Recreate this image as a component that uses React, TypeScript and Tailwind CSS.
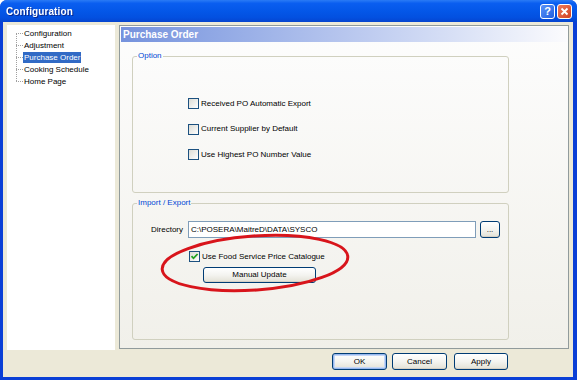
import React from "react";

function CheckBox({ checked = false }: { checked?: boolean }) {
  return (
    <div className="w-[11px] h-[11px] border border-[#1c5180] bg-gradient-to-br from-[#dcdcd5] to-[#ffffff] flex items-center justify-center shrink-0">
      {checked && (
        <svg width="9" height="9" viewBox="0 0 9 9">
          <path d="M1.5 4.2 L3.5 6.3 L7.6 2" stroke="#21a121" strokeWidth="1.8" fill="none" />
        </svg>
      )}
    </div>
  );
}

function XPButton({ label, w, focus = false, h = 17 }: { label: string; w: string; focus?: boolean; h?: number }) {
  return (
    <div
      className={`${w} border border-[#003c74] rounded-[3px] bg-gradient-to-b from-[#ffffff] via-[#f4f4f0] to-[#e3e1d6] flex items-center justify-center text-[8px] text-black ${
        focus ? "shadow-[inset_0_0_0_1px_#97b8ee,inset_0_0_0_2px_#c4d6f6]" : "shadow-[inset_0_-1px_0_#d6d0c5]"
      }`}
      style={{ height: h }}
    >
      {label}
    </div>
  );
}

const treeItems = ["Configuration", "Adjustment", "Purchase Order", "Cooking Schedule", "Home Page"];

export default function App() {
  return (
    <div className="w-[577px] h-[380px] bg-[#0a3fd6] rounded-t-[7px] flex flex-col overflow-hidden font-['Liberation_Sans',Arial,sans-serif] relative">
      {/* Title bar */}
      <div className="h-[22px] shrink-0 bg-[linear-gradient(to_bottom,#2a7bf5_0%,#0a5ef0_15%,#0457e8_50%,#0350e0_80%,#0645cf_100%)] flex items-center pl-[6px] pr-[5px]">
        <span className="text-white font-bold text-[10px] tracking-[0.1px] drop-shadow-[1px_1px_0_#0a2a90]">Configuration</span>
        <div className="ml-auto flex gap-[2px]">
          <div className="w-[15px] h-[15px] rounded-[3px] border border-white bg-gradient-to-br from-[#5a92f8] to-[#1f5fe0] flex items-center justify-center text-white font-bold text-[11px] leading-none">?</div>
          <div className="w-[15px] h-[15px] rounded-[3px] border border-white bg-gradient-to-br from-[#ec7a5a] to-[#d2401e] flex items-center justify-center">
            <svg width="9" height="9" viewBox="0 0 9 9">
              <path d="M1.5 1.5 L7.5 7.5 M7.5 1.5 L1.5 7.5" stroke="white" strokeWidth="1.8" />
            </svg>
          </div>
        </div>
      </div>

      {/* Body */}
      <div className="flex-1 ml-[3px] mr-[4px] mb-[3px] bg-[#ece9d8] flex flex-col">
        <div className="flex gap-[4px] pt-[3px] pl-[4px]">
          {/* Tree */}
          <div className="w-[108px] h-[325px] bg-white relative pt-[2px]">
            <div className="absolute left-[9px] top-[8px] h-[48px] border-l border-dotted border-[#a0a0a0]" />
            {treeItems.map((t) => (
              <div key={t} className="h-[12px] flex items-center">
                <div className="w-[9px]" />
                <div className="w-[7px] border-t border-dotted border-[#a0a0a0]" />
                <span
                  className={`text-[8px] leading-[11px] px-[1px] whitespace-nowrap ${
                    t === "Purchase Order" ? "bg-[#316ac5] text-white" : "text-black"
                  }`}
                >
                  {t}
                </span>
              </div>
            ))}
          </div>

          {/* Right panel */}
          <div className="w-[450px] h-[324px] border border-[#919b9c] bg-gradient-to-b from-[#fdfdfd] to-[#f1f0ea] p-[1px] flex flex-col">
            <div className="h-[15px] bg-gradient-to-r from-[#7592dd] via-[#b7c6ee] to-[#fbfbfd] flex items-center pl-[2px]">
              <span className="text-white font-bold text-[10px]">Purchase Order</span>
            </div>

            <fieldset className="mt-[9px] ml-[11px] w-[377px] h-[142px] border border-[#d0d0bf] rounded-[3px]">
              <legend className="ml-[4px] px-[1px] text-[8px] leading-[10px] text-[#0046d5]">Option</legend>
              <div className="pt-[36px] pl-[55px] flex flex-col gap-[12.5px]">
                {["Received PO Automatic Export", "Current Supplier by Default", "Use Highest PO Number Value"].map((l) => (
                  <div key={l} className="h-[13px] flex items-center gap-[1px]">
                    <CheckBox />
                    <span className="text-[8px] text-black ml-[1px]">{l}</span>
                  </div>
                ))}
              </div>
            </fieldset>

            <fieldset className="mt-[5px] ml-[11px] w-[377px] h-[142px] border border-[#d0d0bf] rounded-[3px]">
              <legend className="ml-[4px] px-[1px] text-[8px] leading-[10px] text-[#0046d5]">Import / Export</legend>
              <div className="pt-[13px] flex items-center">
                <div className="w-[50px] text-right text-[8px] text-black">Directory</div>
                <div className="ml-[5px] w-[288px] h-[17px] border border-[#7f9db9] bg-white flex items-center pl-[2px] text-[8px] text-black">
                  {"C:\\POSERA\\MaitreD\\DATA\\SYSCO"}
                </div>
                <div className="ml-[4px]">
                  <XPButton label="..." w="w-[20px]" />
                </div>
              </div>
              <div className="mt-[12px] ml-[56px] h-[13px] flex items-center gap-[1px]">
                <CheckBox checked />
                <span className="text-[8px] text-black ml-[1px]">Use Food Service Price Catalogue</span>
              </div>
              <div className="mt-[4px] ml-[70px]">
                <XPButton label="Manual Update" w="w-[113px]" h={16} />
              </div>
            </fieldset>
          </div>
        </div>

        {/* Bottom buttons */}
        <div className="mt-[3px] flex justify-end pr-[65px]">
          <XPButton label="OK" w="w-[55px]" focus />
          <div className="w-[5px]" />
          <XPButton label="Cancel" w="w-[55px]" />
          <div className="w-[7px]" />
          <XPButton label="Apply" w="w-[54px]" />
        </div>
      </div>

      {/* Red annotation ellipse */}
      <svg className="absolute left-0 top-0 pointer-events-none" width="577" height="380">
        <ellipse cx="255" cy="263" rx="93" ry="27" fill="none" stroke="#d8141b" strokeWidth="3" transform="rotate(-4 255 263)" />
      </svg>
    </div>
  );
}
